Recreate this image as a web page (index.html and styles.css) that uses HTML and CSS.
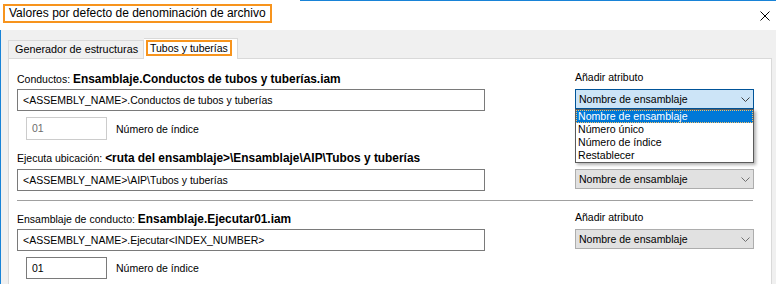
FILE: index.html
```html
<!DOCTYPE html>
<html lang="es">

<head>
    <meta charset="UTF-8">
    <title>Valores por defecto de denominación de archivo</title>
    <link rel="stylesheet" href="styles.css">
</head>

<body>
    <div class="window">
        <div class="title-bar">
            <div class="title">Valores por defecto de denominación de archivo</div>
            <svg class="close" width="10" height="10" viewBox="0 0 10 10">
                <path d="M0.5 0.5 L9.5 9.5 M9.5 0.5 L0.5 9.5" stroke="#000" stroke-width="1" fill="none" />
            </svg>
        </div>

        <div class="client">
            <div class="tabs">
                <div class="tab">Generador de estructuras</div>
                <div class="tab active"><span class="focus">Tubos y tuberías</span></div>
            </div>

            <div class="panel">
                <!-- Conductos -->
                <div class="label-row">
                    <div class="left">Conductos: <b>Ensamblaje.Conductos de tubos y tuberías.iam</b></div>
                    <div class="attr-label">Añadir atributo</div>
                </div>
                <div class="input-row">
                    <div class="text-input">&lt;ASSEMBLY_NAME&gt;.Conductos de tubos y tuberías</div>
                    <div class="combo focused">
                        <span>Nombre de ensamblaje</span>
                        <svg class="chevron" width="9" height="5" viewBox="0 0 9 5">
                            <path d="M0.5 0.5 L4.5 4.5 L8.5 0.5" stroke="#404040" stroke-width="1" fill="none" />
                        </svg>
                        <div class="dropdown">
                            <div class="item selected">Nombre de ensamblaje</div>
                            <div class="item">Número único</div>
                            <div class="item">Número de índice</div>
                            <div class="item">Restablecer</div>
                        </div>
                    </div>
                </div>
                <div class="index-row">
                    <div class="index-box disabled">01</div>
                    <span>Número de índice</span>
                </div>

                <!-- Ejecuta ubicación -->
                <div class="label-row second">
                    <div class="left">Ejecuta ubicación: <b>&lt;ruta del ensamblaje&gt;\Ensamblaje\AIP\Tubos y tuberías</b></div>
                </div>
                <div class="input-row second">
                    <div class="text-input">&lt;ASSEMBLY_NAME&gt;\AIP\Tubos y tuberías</div>
                    <div class="combo">
                        <span>Nombre de ensamblaje</span>
                        <svg class="chevron" width="9" height="5" viewBox="0 0 9 5">
                            <path d="M0.5 0.5 L4.5 4.5 L8.5 0.5" stroke="#707070" stroke-width="1" fill="none" />
                        </svg>
                    </div>
                </div>

                <div class="separator"></div>

                <!-- Ensamblaje de conducto -->
                <div class="label-row third">
                    <div class="left">Ensamblaje de conducto: <b>Ensamblaje.Ejecutar01.iam</b></div>
                    <div class="attr-label">Añadir atributo</div>
                </div>
                <div class="input-row">
                    <div class="text-input">&lt;ASSEMBLY_NAME&gt;.Ejecutar&lt;INDEX_NUMBER&gt;</div>
                    <div class="combo">
                        <span>Nombre de ensamblaje</span>
                        <svg class="chevron" width="9" height="5" viewBox="0 0 9 5">
                            <path d="M0.5 0.5 L4.5 4.5 L8.5 0.5" stroke="#707070" stroke-width="1" fill="none" />
                        </svg>
                    </div>
                </div>
                <div class="index-row">
                    <div class="index-box short">01</div>
                    <span>Número de índice</span>
                </div>
            </div>
        </div>
    </div>
</body>

</html>
```

FILE: styles.css
```css
* {
    box-sizing: border-box;
}

body {
    margin: 0;
    background-color: #f0f0f0;
    font-family: "Liberation Sans", Arial, sans-serif;
    font-size: 10.5px;
    color: #000;
    overflow: hidden;
}

.window {
    width: 776px;
    height: 284px;
}

/* Title bar */
.title-bar {
    height: 30px;
    background: linear-gradient(#1883d7, #1883d7) 300px 0 / 476px 1px no-repeat, #ffffff;
    display: flex;
    justify-content: space-between;
    align-items: flex-start;
}

.title {
    margin: 4px 0 0 3px;
    padding: 0 4px;
    height: 19px;
    line-height: 15px;
    border: 2px solid #f7941d;
    font-size: 12px;
}

.close {
    margin: 11px 6px 0 0;
}

.client {
    height: 254px;
    border-left: 1px solid #1883d7;
    padding: 8px 4px 0 7px;
}

/* Tabs */
.tabs {
    display: flex;
    align-items: flex-end;
    height: 20px;
}

.tab {
    width: 136px;
    height: 18px;
    padding-left: 6px;
    border: 1px solid #d9d9d9;
    border-bottom: none;
    background-color: #f0f0f0;
    line-height: 17px;
    font-size: 10.8px;
}

.tab.active {
    position: relative;
    z-index: 1;
    width: 94px;
    height: 21px;
    margin-bottom: -1px;
    padding: 1px 0 0 2px;
    border-left: none;
    background-color: #ffffff;
}

.focus {
    display: block;
    width: 86px;
    height: 16px;
    padding: 0 2px;
    border: 2px solid #f7941d;
    line-height: 12px;
    font-size: 10.5px;
    white-space: nowrap;
}

/* Panel */
.panel {
    height: 240px;
    padding: 12px 0 0 8px;
    background-color: #ffffff;
    border: 1px solid #d9d9d9;
}

.label-row {
    display: flex;
    height: 16px;
    white-space: nowrap;
}

.label-row.second,
.label-row.third {
    margin-top: 10px;
}

.label-row .left {
    width: 558px;
    line-height: 16px;
}

.label-row b {
    font-size: 11.9px;
}

.attr-label {
    line-height: 12px;
}

.input-row {
    display: flex;
    align-items: flex-start;
    margin-top: 2px;
}

.input-row.second {
    margin-top: 3px;
}

.text-input {
    width: 468px;
    height: 22px;
    margin-right: 90px;
    padding-left: 5px;
    border: 1px solid #7a7a7a;
    line-height: 20px;
    white-space: nowrap;
}

.combo {
    position: relative;
    width: 179px;
    height: 20px;
    padding: 0 3px;
    display: flex;
    align-items: center;
    justify-content: space-between;
    background-color: #e1e1e1;
    border: 1px solid #adadad;
    white-space: nowrap;
}

.combo.focused {
    background-color: #cce4f7;
    border-color: #005499;
}

.chevron {
    margin-top: 1px;
}

/* Open drop-down list */
.dropdown {
    position: absolute;
    top: 19px;
    left: -1px;
    width: 179px;
    background-color: #ffffff;
    border: 1px solid #5a5a5a;
    box-shadow: 2px 2px 3px rgba(0, 0, 0, 0.3);
    z-index: 2;
}

.item {
    height: 13px;
    line-height: 13px;
    padding-left: 2px;
    font-size: 10.6px;
}

.item.selected {
    background-color: #0078d7;
    color: #ffffff;
    outline: 1px dotted #f3c16a;
    outline-offset: -1px;
}

.index-row {
    display: flex;
    align-items: center;
    margin: 6px 0 0 9px;
}

.index-box {
    width: 81px;
    height: 23px;
    margin-right: 9px;
    padding-left: 5px;
    border: 1px solid #7a7a7a;
    line-height: 21px;
}

.index-box.short {
    height: 22px;
    line-height: 20px;
}

.index-box.disabled {
    border-color: #cccccc;
    color: #6d6d6d;
}

.separator {
    width: 736px;
    height: 1px;
    margin-top: 9px;
    background-color: #a0a0a0;
}
```
